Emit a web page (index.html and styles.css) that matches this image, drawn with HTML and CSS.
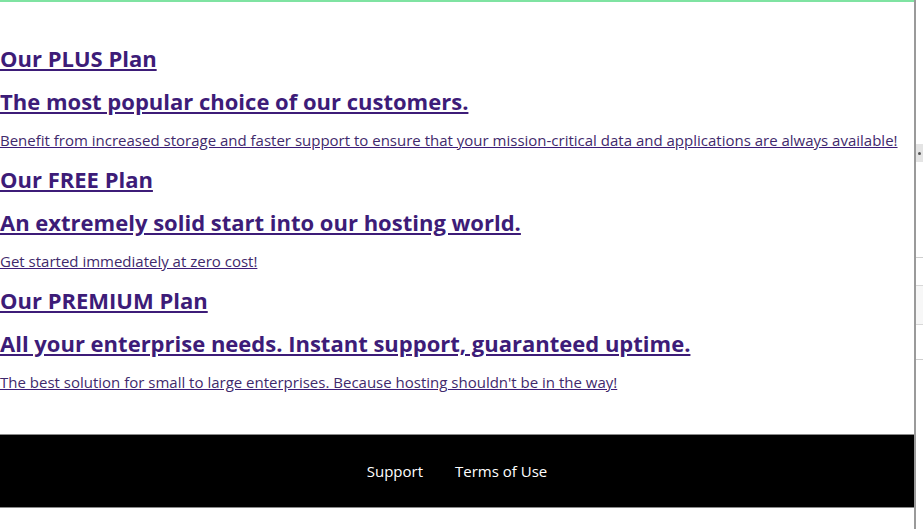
FILE: index.html
```html
<!DOCTYPE html>
<html lang="en">
<head>
<meta charset="utf-8">
<title>Plans</title>
<link rel="stylesheet" href="styles.css">
</head>
<body>
<div class="frame">
  <div class="page">
    <main class="plans">
      <a class="plan" href="#">
        <h2 class="plan-title">Our PLUS Plan</h2>
        <h3 class="plan-tagline">The most popular choice of our customers.</h3>
        <p class="plan-desc">Benefit from increased storage and faster support to ensure that your mission-critical data and applications are always available!</p>
      </a>
      <a class="plan" href="#">
        <h2 class="plan-title">Our FREE Plan</h2>
        <h3 class="plan-tagline">An extremely solid start into our hosting world.</h3>
        <p class="plan-desc">Get started immediately at zero cost!</p>
      </a>
      <a class="plan" href="#">
        <h2 class="plan-title">Our PREMIUM Plan</h2>
        <h3 class="plan-tagline">All your enterprise needs. Instant support, guaranteed uptime.</h3>
        <p class="plan-desc">The best solution for small to large enterprises. Because hosting shouldn't be in the way!</p>
      </a>
    </main>
    <footer class="footer">
      <a class="footer-link" href="#">Support</a>
      <a class="footer-link" href="#">Terms of Use</a>
    </footer>
  </div>
  <aside class="side">
    <div class="side-thumb"><span class="side-dot"></span></div>
    <div class="side-line l1"></div>
    <div class="side-block"></div>
    <div class="side-line l2"></div>
  </aside>
</div>
</body>
</html>
```
FILE: styles.css
```css
* { box-sizing: border-box; }
html, body { margin: 0; padding: 0; background: #fff; }
body {
  font-family: "Open Sans", sans-serif;
  height: 529px;
  overflow: hidden;
}
.frame {
  display: flex;
  height: 529px;
}
.page {
  width: 914px;
  flex: none;
  border-top: 2px solid #7fe3a2;
  display: flex;
  flex-direction: column;
}
.plans {
  display: flex;
  flex-direction: column;
  gap: 15px;
  padding-top: 42px;
}
.plan {
  display: flex;
  flex-direction: column;
  gap: 15px;
  color: #3d1c78;
  text-decoration: underline;
}
.plan-title, .plan-tagline {
  margin: 0;
  font-size: 22px;
  line-height: 28px;
  font-weight: 700;
  color: #3d1c78;
  white-space: nowrap;
}
.plan-desc {
  margin: 0;
  font-size: 15px;
  line-height: 20px;
  color: #3f2a6c;
  white-space: nowrap;
}
.footer {
  margin-top: 42px;
  height: 74px;
  background: #000;
  border-top: 1px solid #8a8a8a;
  border-bottom: 1px solid #8a8a8a;
  display: flex;
  justify-content: center;
  align-items: center;
  gap: 32px;
}
.footer-link {
  color: #fff;
  text-decoration: none;
  font-size: 15px;
}
.side {
  flex: 1;
  border-left: 2px solid #9a9a9a;
  display: flex;
  flex-direction: column;
}
.side-thumb {
  margin-top: 144px;
  height: 18px;
  background: #e4e4e4;
  display: flex;
  align-items: center;
  padding-left: 2px;
}
.side-dot {
  width: 3px;
  height: 3px;
  background: #555;
  border-radius: 50%;
}
.side-line { height: 1px; background: #cfcfcf; }
.side-line.l1 { margin-top: 95px; }
.side-block {
  margin-top: 27px;
  height: 40px;
  border-top: 1px solid #d8d8d8;
  border-bottom: 1px solid #d8d8d8;
  background: #f7f7f7;
}
.side-line.l2 { margin-top: 34px; }
```
